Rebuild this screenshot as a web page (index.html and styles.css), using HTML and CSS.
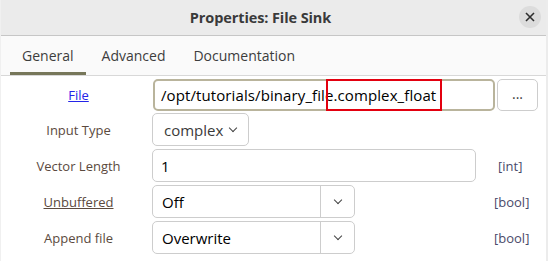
FILE: index.html
```html
<!DOCTYPE html>
<html lang="en">
<head>
    <meta charset="UTF-8">
    <title>Properties: File Sink</title>
    <link rel="stylesheet" href="styles.css">
</head>
<body>
    <div id="dialog">
        <div id="titleBar">
            <span class="title">Properties: File Sink</span>
            <button class="close-btn">
                <svg width="10" height="10" viewBox="0 0 10 10"><path d="M1 1 L9 9 M9 1 L1 9" stroke="#2e2e2e" stroke-width="1.6"/></svg>
            </button>
        </div>
        <div id="tabBar">
            <div class="tab active">General</div>
            <div class="tab">Advanced</div>
            <div class="tab">Documentation</div>
        </div>
        <div id="form">
            <div class="row row-file">
                <div class="label"><a href="#">File</a></div>
                <div class="entry entry-file focused"><span>/opt/tutorials/binary_fil</span><span class="mark">e.complex_float</span></div>
                <button class="browse">...</button>
            </div>
            <div class="row">
                <div class="label">Input Type</div>
                <div class="combo combo-small">complex <span class="chev"></span></div>
            </div>
            <div class="row">
                <div class="label">Vector Length</div>
                <div class="entry entry-vec">1</div>
                <div class="unit">[int]</div>
            </div>
            <div class="row">
                <div class="label"><span class="underlined">Unbuffered</span></div>
                <div class="combo combo-wide"><span class="combo-text">Off</span><span class="combo-btn"><span class="chev"></span></span></div>
                <div class="unit unit-bool">[bool]</div>
            </div>
            <div class="row">
                <div class="label">Append file</div>
                <div class="combo combo-wide"><span class="combo-text">Overwrite</span><span class="combo-btn"><span class="chev"></span></span></div>
                <div class="unit unit-bool">[bool]</div>
            </div>
        </div>
    </div>
</body>
</html>
```

FILE: styles.css
```css
* {
    box-sizing: border-box;
}
body {
    margin: 0;
    width: 548px;
    height: 261px;
    overflow: hidden;
    background: #ffffff;
    font-family: 'Open Sans', 'Noto Sans', sans-serif;
    color: #2e2e2e;
}
#dialog {
    height: 261px;
    border-left: 1px solid #f0f0f0;
    border-right: 2px solid #ececec;
}
#titleBar {
    position: relative;
    height: 36px;
    background: #ebebeb;
    border-bottom: 1px solid #c6c6c6;
    display: flex;
    align-items: center;
    justify-content: center;
    padding-right: 26px;
}
.title {
    font-weight: bold;
    font-size: 14.5px;
    color: #3a3a3a;
    letter-spacing: -0.1px;
}
.close-btn {
    position: absolute;
    right: 5px;
    top: 6px;
    width: 22px;
    height: 22px;
    border: none;
    border-radius: 50%;
    background: #dcdcdc;
    display: flex;
    align-items: center;
    justify-content: center;
    padding: 0;
}
#tabBar {
    display: flex;
    height: 40px;
    background: #fafafa;
    border-bottom: 1px solid #d8d8d8;
    padding-left: 9px;
}
.tab {
    padding: 10px 12px 0;
    font-size: 14px;
    color: #3d3d3d;
    border-bottom: 3px solid transparent;
    margin-right: 4px;
}
.tab.active {
    border-bottom-color: #77775a;
}
#form {
    display: flex;
    flex-direction: column;
    gap: 3px;
    padding-top: 3px;
}
.row {
    display: flex;
    align-items: center;
    height: 33px;
}
.row-file {
    height: 32px;
    margin-bottom: -1px;
}
.label {
    width: 151px;
    text-align: center;
    font-size: 13px;
    color: #5b4a3e;
    padding-left: 4px;
}
.label a {
    color: #2424e8;
}
.underlined {
    text-decoration: underline;
}
.entry, .combo, .browse {
    height: 100%;
    border: 1px solid #cdcdcd;
    border-radius: 5px;
    background: #ffffff;
    font-size: 15px;
    color: #000;
    display: flex;
    align-items: center;
}
.entry {
    padding-left: 8px;
}
.entry-file {
    width: 342px;
    margin-left: 1px;
    border: 2px solid #b9b49c;
    padding-left: 6px;
    letter-spacing: 0.1px;
}
.mark {
    position: relative;
}
.mark::after {
    content: '';
    position: absolute;
    left: 1px;
    right: -6px;
    top: -6px;
    bottom: -6px;
    border: 2px solid #e3000f;
}
.browse {
    width: 41px;
    margin-left: 2px;
    justify-content: center;
    padding: 0 0 4px;
    font-family: inherit;
    font-size: 14px;
    color: #3a3a3a;
}
.combo-small {
    width: 97px;
    padding-left: 11px;
    color: #3a3a3a;
}
.combo-small .chev {
    margin-left: 7px;
}
.chev {
    display: inline-block;
    width: 6px;
    height: 6px;
    border-right: 1px solid #444;
    border-bottom: 1px solid #444;
    transform: rotate(45deg);
    margin-top: -4px;
}
.entry-vec {
    width: 324px;
}
.combo-wide {
    width: 203px;
}
.combo-text {
    flex: 1;
    padding-left: 9px;
}
.combo-btn {
    width: 34px;
    height: 100%;
    border-left: 1px solid #cdcdcd;
    display: flex;
    align-items: center;
    justify-content: center;
}
.unit {
    margin-left: 22px;
    font-size: 13px;
    color: #4a4a6a;
}
.unit-bool {
    margin-left: 139px;
}
```
